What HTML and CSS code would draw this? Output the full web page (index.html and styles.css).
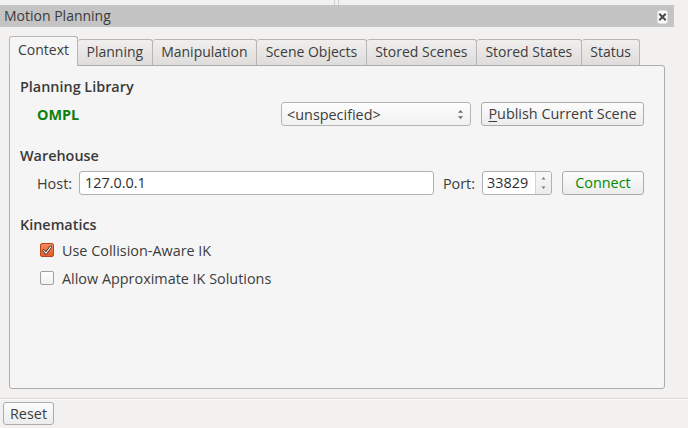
FILE: index.html
```html
<!DOCTYPE html>
<html>
<head>
<meta charset="utf-8">
<link rel="stylesheet" href="styles.css">
</head>
<body>
<div class="topstrip"><span class="grip"></span></div>
<div class="titlebar">
  <span class="title">Motion Planning</span>
  <span class="close">
    <svg width="11" height="14" viewBox="0 0 11 14"><rect x="0.5" y="0.5" width="10" height="13" rx="2.5" fill="#fbfbfb" stroke="#e0e0e0"/><path d="M3 4.5 L8 9.5 M8 4.5 L3 9.5" stroke="#4a4a4a" stroke-width="2" stroke-linecap="square"/></svg>
  </span>
</div>
<div class="dock">
  <div class="tabs">
    <div class="tab active">Context</div>
    <div class="tab">Planning</div>
    <div class="tab">Manipulation</div>
    <div class="tab">Scene Objects</div>
    <div class="tab">Stored Scenes</div>
    <div class="tab">Stored States</div>
    <div class="tab">Status</div>
  </div>
  <div class="panel">
    <section class="group">
      <h3 class="heading">Planning Library</h3>
      <div class="row">
        <span class="ompl">OMPL</span>
        <span class="spacer"></span>
        <div class="combo">
          <span>&lt;unspecified&gt;</span>
          <svg class="arrows" width="7" height="11" viewBox="0 0 7 11"><path d="M3.5 1 L6 3.8 L1 3.8 Z M3.5 10 L6 7.2 L1 7.2 Z" fill="#6a6a6a"/></svg>
        </div>
        <button class="btn publish"><u>P</u>ublish Current Scene</button>
      </div>
    </section>
    <section class="group">
      <h3 class="heading">Warehouse</h3>
      <div class="row">
        <span class="label">Host:</span>
        <div class="input host">127.0.0.1</div>
        <span class="label port">Port:</span>
        <div class="spin">
          <span class="spin-val">33829</span>
          <span class="spin-btns"><svg width="7" height="20" viewBox="0 0 7 20"><path d="M3.5 4 L5.5 6.5 L1.5 6.5 Z M3.5 16 L5.5 13.5 L1.5 13.5 Z" fill="#7a7a7a"/></svg></span>
        </div>
        <button class="btn connect">Connect</button>
      </div>
    </section>
    <section class="group">
      <h3 class="heading">Kinematics</h3>
      <div class="checks">
        <label class="check">
          <span class="box checked"><svg width="13" height="13" viewBox="0 0 13 13"><path d="M3 6.5 L5.5 9.5 L10.5 2.5" fill="none" stroke="#3a2a22" stroke-width="2.8" stroke-linecap="round" stroke-linejoin="round"/><path d="M3 6.5 L5.5 9.5 L10.5 2.5" fill="none" stroke="#ffffff" stroke-width="1.2" stroke-linecap="round" stroke-linejoin="round"/></svg></span>
          <span>Use Collision-Aware IK</span>
        </label>
        <label class="check">
          <span class="box"></span>
          <span>Allow Approximate IK Solutions</span>
        </label>
      </div>
    </section>
  </div>
</div>
<div class="separator"></div>
<div class="footer">
  <button class="btn reset">Reset</button>
</div>
</body>
</html>
```

FILE: styles.css
```css
html, body {
  margin: 0;
  padding: 0;
}
body {
  width: 688px;
  height: 428px;
  overflow: hidden;
  background: #f2f1f0;
  font-family: "Open Sans", "DejaVu Sans", sans-serif;
  font-size: 14.4px;
  color: #3c3c3c;
}
.topstrip {
  height: 5px;
  display: flex;
}
.grip {
  margin-left: 334px;
  width: 3px;
  height: 5px;
  border-left: 1px solid #d0d0d0;
  border-right: 1px solid #d0d0d0;
}
.titlebar {
  width: 674px;
  height: 22px;
  box-sizing: border-box;
  background: #c4c4c4;
  display: flex;
  align-items: center;
  justify-content: space-between;
  padding: 0 6px 0 4px;
}
.title {
  color: #3a3a3a;
  line-height: 22px;
  font-size: 14px;
}
.close {
  display: flex;
  margin-top: 1px;
}
.dock {
  margin-left: 9px;
  width: 656px;
  padding-top: 9px;
}
.tabs {
  display: flex;
  align-items: flex-end;
  height: 29px;
  position: relative;
  z-index: 1;
}
.tab {
  height: 26px;
  box-sizing: border-box;
  padding: 0 8.5px;
  font-size: 14px;
  line-height: 24px;
  border: 1px solid #b6b6b6;
  border-bottom: none;
  border-left: none;
  border-radius: 3px 3px 0 0;
  background: linear-gradient(#f0efee, #dedddc);
  color: #3c3c3c;
  white-space: nowrap;
}
.tab.active {
  height: 30px;
  margin-bottom: -1px;
  border-left: 1px solid #b6b6b6;
  background: #f5f5f5;
  line-height: 26px;
  padding: 0 8px 0 8px;
}
.panel {
  height: 324px;
  box-sizing: border-box;
  border: 1px solid #acacac;
  border-radius: 0 3px 3px 3px;
  background: #f5f5f5;
  padding: 0 20px 0 10px;
  display: flex;
  flex-direction: column;
  gap: 20px;
}
.group:first-child {
  margin-top: 11px;
}
.heading {
  margin: 0 0 5px 0;
  font-size: 14.4px;
  font-weight: 650;
  line-height: 20px;
  color: #3a3a3a;
}
.row {
  display: flex;
  align-items: center;
  height: 24px;
  padding-left: 17px;
}
.ompl {
  color: #0c800c;
  font-weight: 700;
}
.spacer {
  flex: 1;
}
.combo {
  width: 190px;
  height: 24px;
  box-sizing: border-box;
  border: 1px solid #b4b4b4;
  border-radius: 3px;
  background: linear-gradient(#fdfdfd, #f1f1f1);
  display: flex;
  align-items: center;
  justify-content: space-between;
  padding: 0 6px 0 5px;
  margin-right: 10px;
}
.btn {
  height: 24px;
  box-sizing: border-box;
  border: 1px solid #ababab;
  border-radius: 3px;
  background: linear-gradient(#fcfcfc, #ececec);
  font-family: inherit;
  font-size: 14.4px;
  color: #3c3c3c;
  padding: 0;
  line-height: 20px;
}
.publish {
  width: 163px;
}
.publish u {
  text-decoration-thickness: 1px;
  text-underline-offset: 2px;
}
.label {
  margin-right: 7px;
}
.input {
  flex: 1;
  height: 24px;
  box-sizing: border-box;
  border: 1px solid #b0b0b0;
  border-radius: 3px;
  background: #ffffff;
  padding: 0 5px;
  line-height: 22px;
  color: #2e2e2e;
}
.port {
  margin-left: 9px;
}
.spin {
  width: 70px;
  height: 24px;
  box-sizing: border-box;
  border: 1px solid #b0b0b0;
  border-radius: 3px;
  background: #ffffff;
  display: flex;
  margin-right: 10px;
  overflow: hidden;
}
.spin-val {
  flex: 1;
  padding-left: 4px;
  line-height: 22px;
  color: #2e2e2e;
}
.spin-btns {
  width: 15px;
  border-left: 1px solid #d4d4d4;
  background: linear-gradient(#f8f8f8, #ebebeb);
  display: flex;
  align-items: center;
  justify-content: center;
}
.connect {
  width: 82px;
  color: #008a00;
}
.checks {
  display: flex;
  flex-direction: column;
  gap: 8px;
  padding-left: 20px;
}
.check {
  display: flex;
  align-items: center;
  gap: 8px;
  height: 20px;
}
.box {
  width: 14px;
  height: 14px;
  box-sizing: border-box;
  border: 1px solid #a0a0a0;
  border-radius: 2px;
  background: linear-gradient(#ffffff, #f0f0f0);
  display: flex;
  align-items: center;
  justify-content: center;
}
.box.checked {
  border-color: #b8461e;
  background: linear-gradient(#f28a5e, #e25d2c);
}
.separator {
  margin-top: 9px;
  height: 1px;
  background: #d8d8d6;
  border-bottom: 1px solid #fafafa;
}
.footer {
  padding: 2px 0 0 3px;
}
.reset {
  width: 51px;
  height: 23px;
}
```
